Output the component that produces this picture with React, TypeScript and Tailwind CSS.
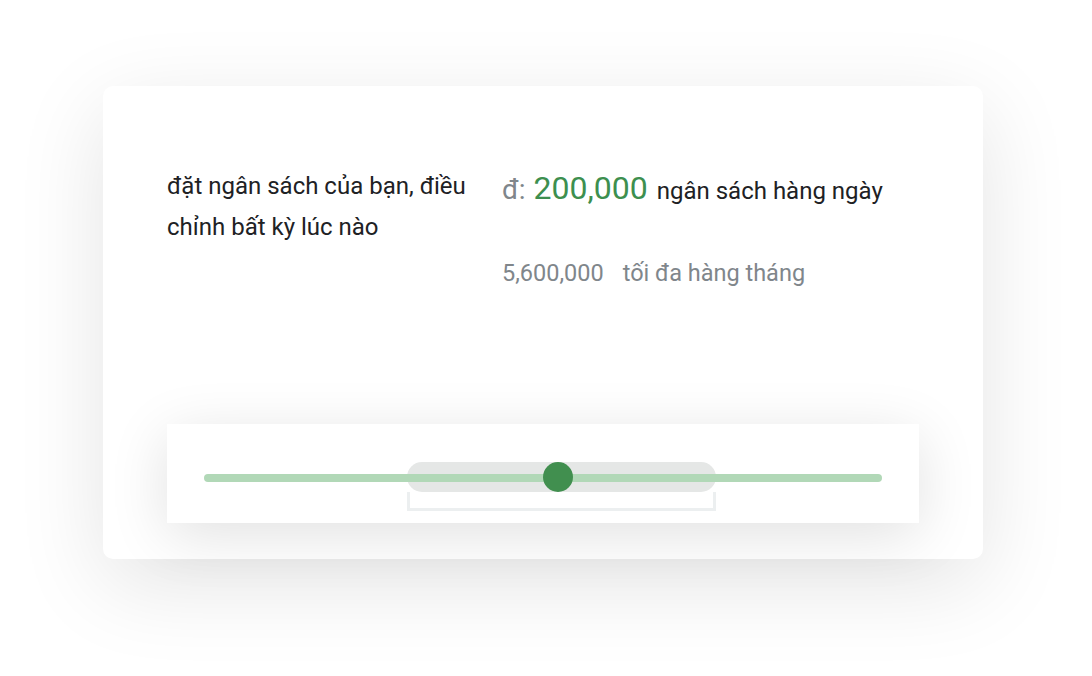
import React from 'react';

export default function App() {
  const thumbPct = 52.2;

  return (
    <div className="w-[1092px] h-[676px] bg-white overflow-hidden font-['Roboto',sans-serif] pt-[86px] pl-[103px]">
      <div className="w-[880px] h-[473px] bg-white rounded-[10px] shadow-[0_24px_90px_rgba(0,0,0,0.11)] px-16 pt-[80px] flex flex-col">
        <div className="flex">
          <p className="w-[335px] text-[24px] leading-[41px] text-[#202124]">
            đặt ngân sách của bạn, điều chỉnh bất kỳ lúc nào
          </p>
          <div className="flex flex-col">
            <div className="flex items-baseline h-[42px] -mt-[2px]">
              <span className="text-[28px] text-[#80868b]">đ:</span>
              <span className="text-[32px] text-[#3d8f4f] ml-[8px]">200,000</span>
              <span className="text-[24px] text-[#202124] ml-[9px]">ngân sách hàng ngày</span>
            </div>
            <div className="flex mt-[50px] text-[23.5px] text-[#80868b]">
              <span>5,600,000</span>
              <span className="ml-[19px]">tối đa hàng tháng</span>
            </div>
          </div>
        </div>

        <div className="mt-auto mb-[36px] h-[99px] bg-white shadow-[0_12px_60px_rgba(0,0,0,0.12)] px-[37px] pt-[38px]">
          <div className="relative h-[30px]">
            <div className="absolute left-[203px] top-0 w-[309px] h-[30px] rounded-full bg-[#e5e7e6]" />
            <div className="absolute left-[203px] top-[30px] w-[309px] h-[19px] border-[3px] border-t-0 border-[#eceff0]" />
            <div className="absolute left-0 right-0 top-[12px] h-[8px] rounded-full bg-[#b1d8b7]" />
            <div
              className="absolute top-0 w-[30px] h-[30px] -ml-[15px] rounded-full bg-[#418f4f]"
              style={{ left: `${thumbPct}%` }}
            />
          </div>
        </div>
      </div>
    </div>
  );
}
